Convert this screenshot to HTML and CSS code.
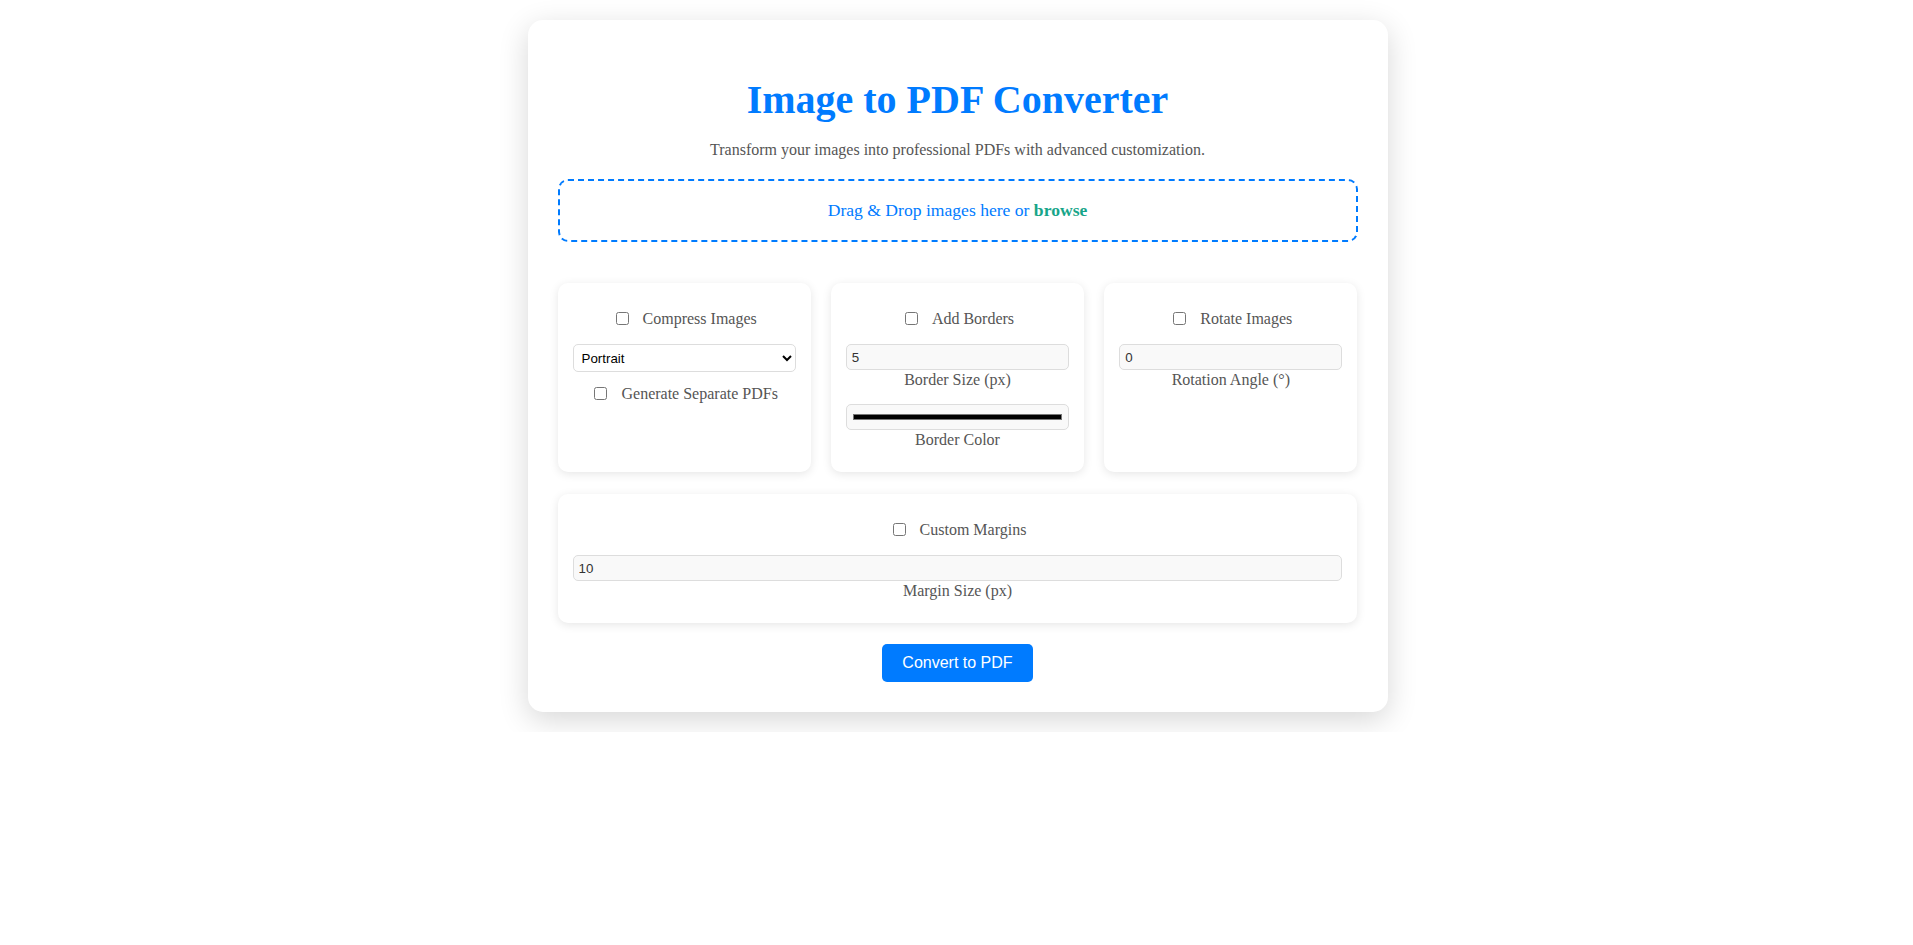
FILE: index.html
```html
<!DOCTYPE html>
<html lang="en">
<head>
<meta charset="utf-8">
<title>Image to PDF Converter</title>
<link rel="stylesheet" href="styles.css">
</head>
<body>
<div class="container">
  <h1 class="title">Image to PDF Converter</h1>
  <p class="subtitle">Transform your images into professional PDFs with advanced customization.</p>
  <div class="dropzone">Drag &amp; Drop images here or <span class="browse">browse</span></div>
  <div class="options">
    <div class="card">
      <label class="check-row"><input type="checkbox" class="check">Compress Images</label>
      <select class="select"><option>Portrait</option><option>Landscape</option></select>
      <label class="check-row check-row-after"><input type="checkbox" class="check">Generate Separate PDFs</label>
    </div>
    <div class="card">
      <label class="check-row"><input type="checkbox" class="check">Add Borders</label>
      <input type="number" class="field" value="5">
      <div class="field-label">Border Size (px)</div>
      <input type="color" class="field color-field next-field" value="#000000">
      <div class="field-label">Border Color</div>
    </div>
    <div class="card">
      <label class="check-row"><input type="checkbox" class="check">Rotate Images</label>
      <input type="number" class="field" value="0">
      <div class="field-label">Rotation Angle (°)</div>
    </div>
    <div class="card card-wide">
      <label class="check-row"><input type="checkbox" class="check">Custom Margins</label>
      <input type="number" class="field" value="10">
      <div class="field-label">Margin Size (px)</div>
    </div>
  </div>
  <div class="actions"><button class="convert">Convert to PDF</button></div>
</div>
</body>
</html>
```
FILE: styles.css
```css
html, body {
  margin: 0;
  padding: 0;
  background: #ffffff;
}
body {
  font-family: "Liberation Serif", "Times New Roman", serif;
  color: #555;
  padding: 20px 0 20px 2px;
}
.container {
  width: 800px;
  margin: 0 auto;
  padding: 30px;
  background: #fff;
  border-radius: 15px;
  box-shadow: 0 8px 30px rgba(0, 0, 0, 0.16);
}
.title {
  font-size: 40px;
  font-weight: bold;
  color: #007bff;
  text-align: center;
  margin: 27px 0 18px;
  line-height: 46px;
}
.subtitle {
  margin: 0 0 20px;
  text-align: center;
  font-size: 16px;
  line-height: 18px;
  color: #555;
}
.dropzone {
  border: 2px dashed #007bff;
  border-radius: 10px;
  padding: 20px;
  text-align: center;
  font-size: 17.6px;
  line-height: 19px;
  color: #007bff;
}
.browse {
  color: #17a589;
  font-weight: bold;
}
.options {
  margin-top: 41px;
  display: grid;
  grid-template-columns: repeat(3, 1fr);
  column-gap: 20px;
  row-gap: 22px;
}
.card {
  background: #fff;
  border-radius: 10px;
  padding: 16px 15px 22px;
  box-shadow: 0 2px 10px rgba(0, 0, 0, 0.1);
  text-align: center;
}
.card-wide {
  grid-column: 1 / -1;
}
.check-row {
  display: block;
  margin-top: 10px;
  margin-bottom: 15px;
  font-size: 16px;
  line-height: 20px;
  color: #555;
}
.check-row-after {
  margin-top: 12px;
  margin-bottom: 0;
}
.check {
  width: 13px;
  height: 13px;
  margin: 0 14px 0 4px;
  vertical-align: -1px;
}
.select {
  display: block;
  width: 100%;
  height: 28px;
  box-sizing: border-box;
  border: 1px solid #ddd;
  border-radius: 5px;
  background: #fff;
  font-family: "Liberation Sans", Arial, sans-serif;
  font-size: 13.33px;
  color: #000;
  padding: 0 4px;
}
.field {
  display: block;
  width: 100%;
  height: 26px;
  box-sizing: border-box;
  border: 1px solid #ddd;
  border-radius: 5px;
  background: #f9f9f9;
  padding: 5px;
  font-family: "Liberation Sans", Arial, sans-serif;
  font-size: 13.33px;
  color: #333;
  margin: 0;
}
.color-field {
  padding: 5px 4px;
  cursor: pointer;
}
.next-field {
  margin-top: 14px;
}
.field-label {
  font-size: 16px;
  line-height: 20px;
  color: #555;
}
.actions {
  text-align: center;
  margin-top: 21px;
}
.convert {
  background: #007bff;
  color: #fff;
  border: none;
  border-radius: 5px;
  height: 38px;
  padding: 0 20px;
  font-family: "Liberation Sans", Arial, sans-serif;
  font-size: 16px;
  cursor: pointer;
}
```
